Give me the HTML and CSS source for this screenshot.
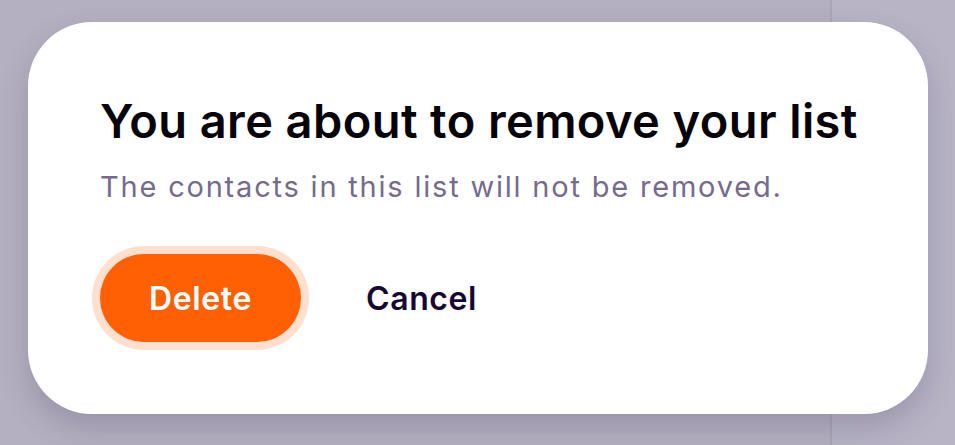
FILE: index.html
```html
<!DOCTYPE html>
<html lang="en">
<head>
<meta charset="utf-8">
<title>Remove list</title>
<link rel="stylesheet" href="styles.css">
</head>
<body>
<div class="page">
  <main class="main"></main>
  <aside class="side"></aside>
</div>
<div class="overlay">
  <section class="dialog" role="dialog" aria-labelledby="dlg-title">
    <h1 class="dialog-title" id="dlg-title">You are about to remove your list</h1>
    <p class="dialog-text">The contacts in this list will not be removed.</p>
    <div class="dialog-actions">
      <button class="btn btn-delete" type="button">Delete</button>
      <button class="btn btn-cancel" type="button">Cancel</button>
    </div>
  </section>
</div>
</body>
</html>
```

FILE: styles.css
```css
html, body {
  margin: 0;
  padding: 0;
  height: 100%;
}
body {
  font-family: Inter, "Noto Sans", "Liberation Sans", sans-serif;
  background: #b5b1c2;
  overflow: hidden;
}
.page {
  display: flex;
  height: 100%;
}
.main {
  width: 830px;
  flex: none;
  background: #b4b0c1;
  border-right: 2px solid #aaa5b8;
}
.side {
  flex: 1;
  background: #b8b4c6;
}
.overlay {
  position: absolute;
  left: 28px;
  top: 22px;
}
.dialog {
  box-sizing: border-box;
  width: 900px;
  height: 392px;
  background: #fff;
  border-radius: 64px;
  padding: 0 40px 0 72px;
  box-shadow: 0 14px 30px rgba(60, 50, 80, 0.22);
}
.dialog-title {
  margin: 0;
  padding-top: 72px;
  font-size: 47px;
  line-height: 54px;
  font-weight: 600;
  letter-spacing: 0.4px;
  white-space: nowrap;
  color: #050309;
}
.dialog-text {
  margin: 21px 0 0;
  font-size: 29px;
  line-height: 36px;
  font-weight: 400;
  letter-spacing: 1.8px;
  white-space: nowrap;
  color: #766b8c;
}
.dialog-actions {
  display: flex;
  align-items: center;
  margin-top: 49px;
  gap: 57px;
}
.btn {
  font-family: inherit;
  border: 0;
  cursor: pointer;
  font-size: 32px;
  font-weight: 600;
  letter-spacing: 0.6px;
  padding: 0;
  background: none;
}
.btn-delete {
  width: 201px;
  height: 88px;
  border-radius: 44px;
  background: #ff6003;
  color: #fff;
  box-shadow: 0 0 0 8px #ffdfcd;
}
.btn-cancel {
  color: #170833;
  margin-left: 8px;
}
```
